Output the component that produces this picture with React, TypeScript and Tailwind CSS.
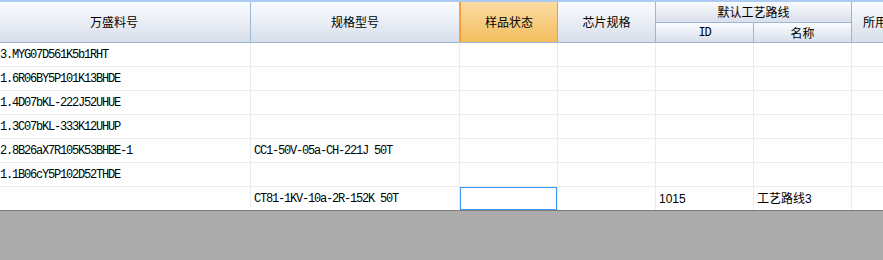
import React from "react";

type Row = {
  code: string;
  spec: string;
  id: string;
  route: string;
  editing?: boolean;
};

const rows: Row[] = [
  { code: "3.MYG07D561K5b1RHT", spec: "", id: "", route: "" },
  { code: "1.6R06BY5P101K13BHDE", spec: "", id: "", route: "" },
  { code: "1.4D07bKL-222J52UHUE", spec: "", id: "", route: "" },
  { code: "1.3C07bKL-333K12UHUP", spec: "", id: "", route: "" },
  { code: "2.8B26aX7R105K53BHBE-1", spec: "CC1-50V-05a-CH-221J 50T", id: "", route: "" },
  { code: "1.1B06cY5P102D52THDE", spec: "", id: "", route: "" },
  { code: "", spec: "CT81-1KV-10a-2R-152K 50T", id: "1015", route: "工艺路线3", editing: true },
];

const mono = "font-['Liberation_Mono',monospace] text-[12px] tracking-[-1.2px]";
const sans = "font-['Liberation_Sans','Noto_Sans_CJK_SC',sans-serif] text-[12px]";
const head =
  "bg-gradient-to-b from-[#fafcfe] to-[#d8dfeb] border-[#9cb6d4] flex items-center justify-center font-['Noto_Sans_CJK_SC',sans-serif] text-[12px] text-black";

export default function App() {
  return (
    <div className="w-[883px] h-[260px] bg-[#ababab] overflow-hidden flex flex-col">
      <div className="bg-white flex flex-col border-t-2 border-[#abcbf2]">
        {/* header */}
        <div className="flex h-[41px] border-b border-[#9cb6d4]">
          <div className={`${head} w-[251px] border-r pr-[22px]`}>万盛料号</div>
          <div className={`${head} w-[209px] border-r`}>规格型号</div>
          <div className="w-[98px] flex items-center justify-center border-x border-[#f49b3c] bg-gradient-to-b from-[#fbdca2] to-[#f3bd5d] font-['Noto_Sans_CJK_SC',sans-serif] text-[12px]">
            样品状态
          </div>
          <div className={`${head} w-[98px] border-r`}>芯片规格</div>
          <div className="w-[196px] flex flex-col border-r border-[#9cb6d4]">
            <div className={`${head} h-[21px] border-b`}>默认工艺路线</div>
            <div className="flex flex-1">
              <div className={`${head} w-[98px] border-r`}>
                <span className={mono}>ID</span>
              </div>
              <div className={`${head} flex-1`}>名称</div>
            </div>
          </div>
          <div className={`${head} flex-1 !justify-start pl-[11px] overflow-hidden whitespace-nowrap`}>所用芯片</div>
        </div>
        {/* body */}
        {rows.map((r, i) => (
          <div
            key={i}
            className={`flex ${i === rows.length - 1 ? "h-[23px]" : "h-[24px] border-b border-[#ebebeb]"}`}
          >
            <div className={`w-[251px] border-r border-[#ebebeb] flex items-center whitespace-nowrap overflow-hidden ${mono}`}>
              {r.code}
            </div>
            <div className={`w-[209px] border-r border-[#ebebeb] flex items-center pl-[3px] whitespace-nowrap ${mono}`}>
              {r.spec}
            </div>
            <div className="w-[98px] border-r border-[#ebebeb] flex">
              {r.editing && <div className="w-[97px] h-[23px] border border-[#3d97f5] bg-white" />}
            </div>
            <div className="w-[98px] border-r border-[#ebebeb]" />
            <div className={`w-[98px] border-r border-[#ebebeb] flex items-center pl-[3px] ${sans}`}>{r.id}</div>
            <div className={`w-[98px] border-r border-[#ebebeb] flex items-center pl-[3px] ${sans}`}>{r.route}</div>
            <div className="flex-1" />
          </div>
        ))}
      </div>
      <div className="h-px bg-[#7d7d7d]" />
    </div>
  );
}
